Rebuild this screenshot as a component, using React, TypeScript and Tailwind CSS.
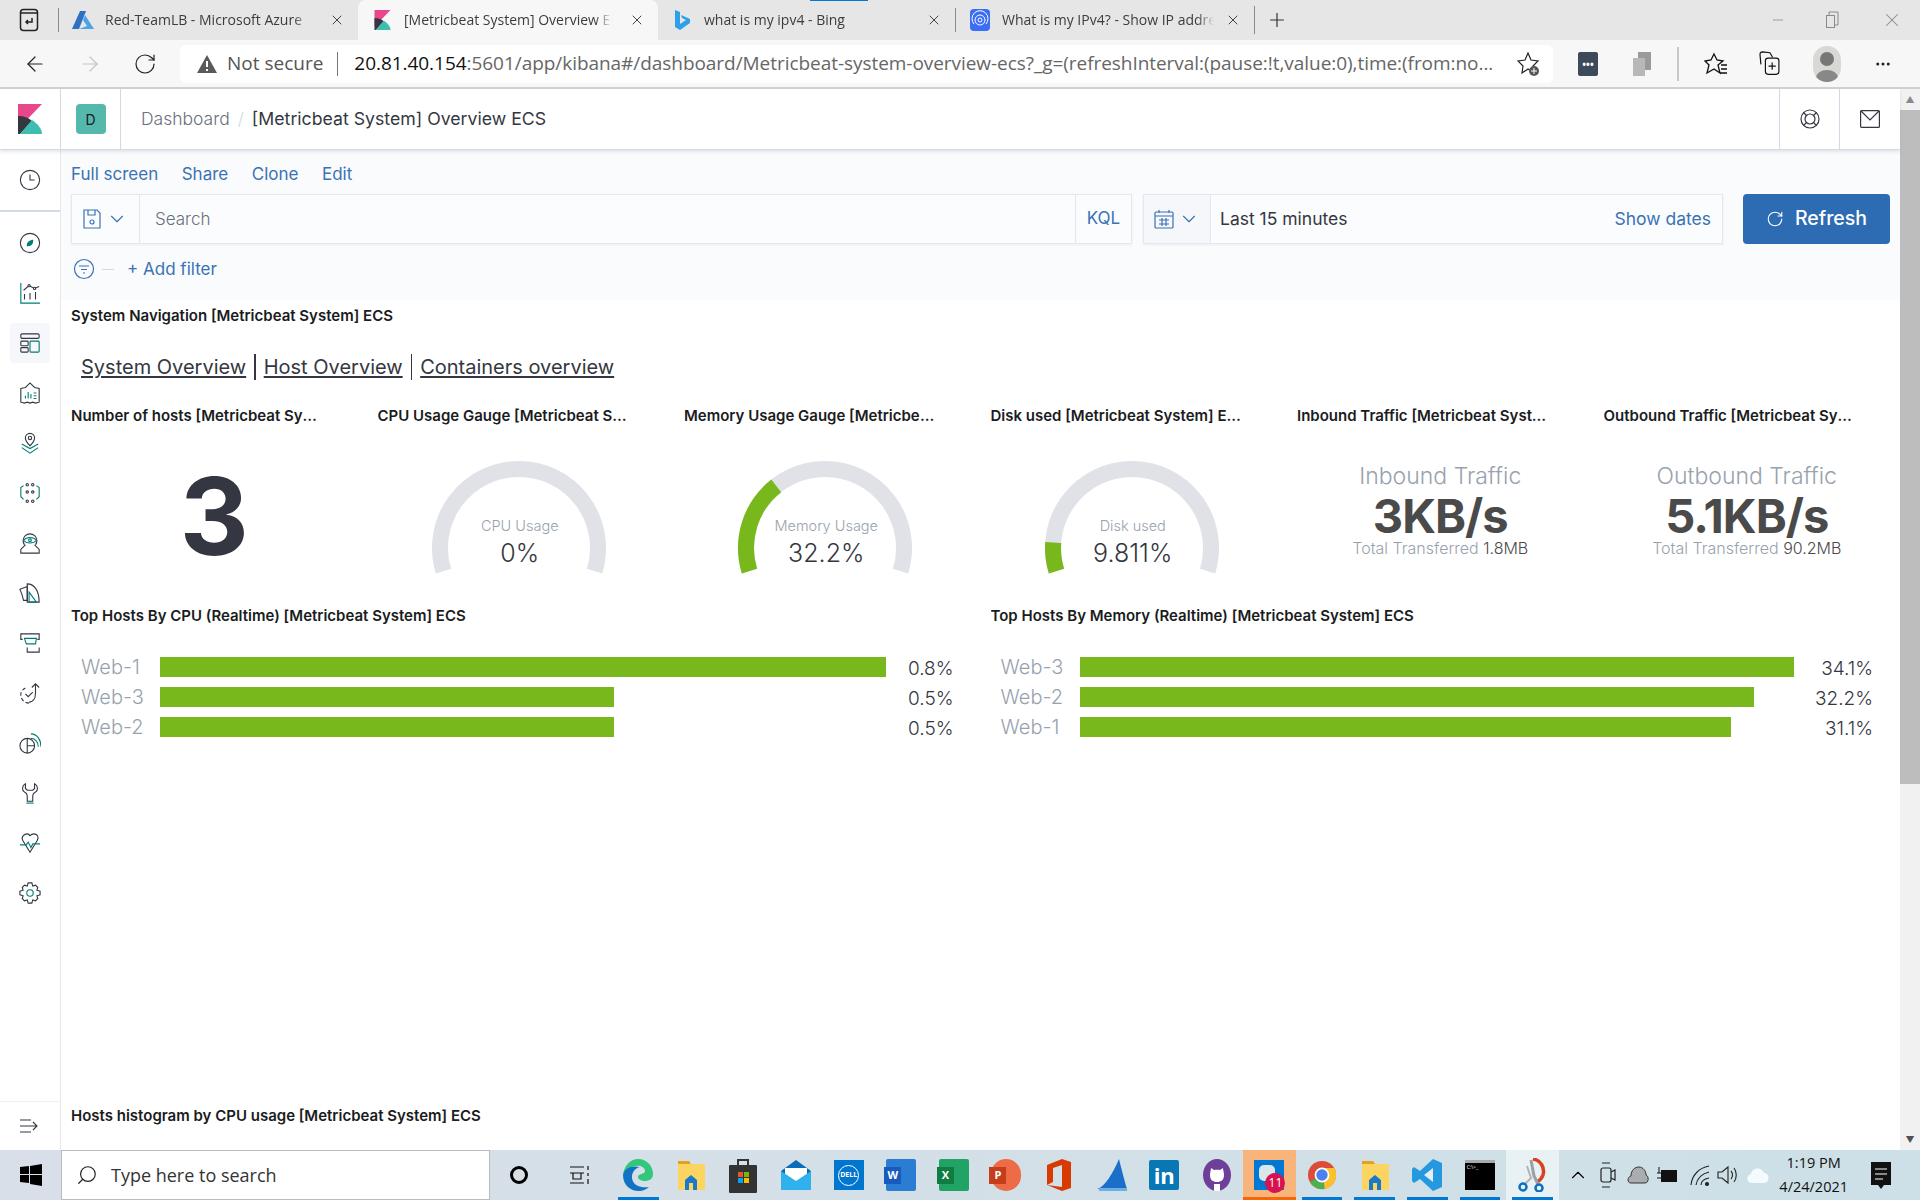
import React from 'react';
import { ArrowLeft, ArrowRight, RotateCw, X, Plus, Minus, Search, ChevronDown, ChevronUp, MoreHorizontal } from 'lucide-react';

const inter = "font-['Inter',sans-serif]";

const GREEN = '#78b81c';

const polar = (r: number, deg: number) => {
  const a = (deg * Math.PI) / 180;
  return `${(100 + r * Math.cos(a)).toFixed(2)} ${(90 - r * Math.sin(a)).toFixed(2)}`;
};

const arc = (from: number, to: number) => {
  const large = from - to > 180 ? 1 : 0;
  return `M${polar(79, from)} A79 79 0 ${large} 1 ${polar(79, to)}`;
};

const Gauge = ({ label, value, pct }: { label: string; value: string; pct: number }) => {
  const end = 197 - (214 * pct) / 100;
  return (
    <div className="relative mx-auto mt-[24px] h-[130px] w-[200px] -translate-x-[2px]">
      <svg width="200" height="130" viewBox="0 0 200 130" fill="none">
        <path d={arc(197, -17)} stroke="#e0e2e7" strokeWidth="16" />
        {pct > 0 && <path d={arc(197, end)} stroke={GREEN} strokeWidth="16" />}
      </svg>
      <div className="absolute inset-x-0 top-[58px] flex translate-x-[1px] flex-col items-center">
        <div className="text-[14.5px] leading-[20px] font-light text-[#98a2ae]">{label}</div>
        <div className="mt-[2px] text-[25px] leading-[30px] font-light text-[#343741]">{value}</div>
      </div>
    </div>
  );
};

const Traffic = ({ label, value, total }: { label: string; value: string; total: string }) => (
  <div className="flex flex-col items-center pt-[26px]">
    <div className="text-[23px] leading-[32px] font-light text-[#98a2ae]">{label}</div>
    <div className="mt-[1px] text-[47px] leading-[46px] font-bold tracking-[-1px] text-[#4a4a4a]">{value}</div>
    <div className="text-[16px] leading-[18px] font-light text-[#98a2ae]">
      Total Transferred <span className="text-[#4a4a4a]">{total}</span>
    </div>
  </div>
);

const Title = ({ children, short }: { children: React.ReactNode; short?: boolean }) => (
  <div className="flex h-[34px] items-center px-[10px] pb-[1px] text-[15px] font-semibold text-[#1a1c21]">
    <span className={`truncate ${short ? 'max-w-[253px]' : ''}`}>{children}</span>
  </div>
);

const Bars = ({ rows, max }: { rows: { name: string; value: number }[]; max: number }) => {
  const top = rows[0].value;
  return (
    <div className="mt-[18px] flex flex-col">
      {rows.map(r => (
        <div key={r.name} className="flex h-[30px] items-center pl-[20px] pr-[27px]">
          <div className="w-[79px] text-[20px] font-light text-[#98a2ae]">{r.name}</div>
          <div className="shrink-0" style={{ width: max }}>
            <div className="h-5 bg-[#78b81c]" style={{ width: (r.value / top) * max }} />
          </div>
          <div className="mt-[4px] flex-1 text-right text-[19px] font-light text-[#343741]">{r.value}%</div>
        </div>
      ))}
    </div>
  );
};

const KibanaLogo = ({ w, h }: { w: number; h: number }) => (
  <svg width={w} height={h} viewBox="0 0 24 30">
    <path d="M0 0H24L0 25Z" fill="#e8488b" />
    <path d="M0 12C6 12 11 14 14 17L2 30H0Z" fill="#343741" />
    <path d="M2 30L14 16C20 20 24 25 24 30Z" fill="#3ebeb0" />
  </svg>
);

const Tab = ({ icon, title, active, width, textWidth }: { icon: React.ReactNode; title: string; active?: boolean; width: string; textWidth: string }) => (
  <div className={`flex h-[40px] items-center pl-[13px] ${width} ${active ? 'rounded-t-[8px] bg-[#f7f7f7]' : ''}`}>
    <div className="flex w-[22px] shrink-0 justify-center">{icon}</div>
    <div className={`ml-[11px] -translate-y-[1px] overflow-hidden whitespace-nowrap text-[14px] text-[#3c3c3c] [mask-image:linear-gradient(to_right,black_92%,transparent)] ${textWidth}`}>{title}</div>
    <X size={16} strokeWidth={1.5} className="ml-auto mr-[13px] shrink-0 text-[#444]" />
  </div>
);

const S = ({ children }: { children: React.ReactNode }) => (
  <svg width="22" height="22" viewBox="0 0 24 24" fill="none" stroke="#343741" strokeWidth="1.200">
    {children}
  </svg>
);

const T = '#017d73';

const navIcons = [
  <S key="discover"><circle cx="12" cy="12" r="10.500" /><path d="M9 15C9 12 11 9.500 15 9C15 12.500 13 15 9 15Z" stroke={T} fill={T} /></S>,
  <S key="visualize"><path d="M2 1V23H23" stroke={T} /><path d="M6 13V19M12 12V19M18 11V19" /><path d="M5 9L11 4L17 7L22 5" /><circle cx="11" cy="4" r="1.200" fill="#fff" /><circle cx="17" cy="7" r="1.200" fill="#fff" /></S>,
  <S key="dashboard"><rect x="2" y="2" width="20" height="5" rx="1.500" /><rect x="2" y="10" width="8" height="5" rx="1" /><rect x="2" y="17" width="8" height="5" rx="1" /><rect x="12" y="10" width="10" height="12" rx="1" stroke={T} /></S>,
  <S key="canvas"><path d="M2 7L7 6L12 1L17 6L22 7V22L18 23L15 22L12 23L9 22L6 23L2 22Z" /><path d="M7 18V15M10 18V11M13 18V13" stroke={T} /><path d="M16 12H19M16 15H19M16 18H19" stroke={T} /></S>,
  <S key="maps"><path d="M12 15C8 11 7 9 7 6.500A5 5 0 0 1 17 6.500C17 9 16 11 12 15Z" /><circle cx="12" cy="6.500" r="1.800" /><path d="M3 13L12 18L21 13M3 17L12 23L21 17" stroke={T} /></S>,
  <S key="ml"><circle cx="9" cy="3" r="1.300" /><circle cx="15" cy="3" r="1.300" /><circle cx="9" cy="11" r="1.300" /><circle cx="15" cy="11" r="1.300" /><circle cx="9" cy="21" r="1.300" /><circle cx="15" cy="21" r="1.300" /><path d="M5 4L2 6V16L5 19M19 4L22 6V16L19 19" stroke={T} /></S>,
  <S key="infra"><path d="M6 14A7.500 7.500 0 1 1 18 14" /><path d="M5 9C8 5 16 5 19 9C16 13 8 13 5 9Z" stroke={T} /><circle cx="12" cy="9" r="1.500" stroke={T} /><path d="M7 14L2 19V23H22V19L17 14" /></S>,
  <S key="logs"><path d="M1 8L9 5V20H5L3 13Z" /><path d="M9 2C17 2 22 10 22 22H9Z" /><path d="M11 11L19 22H11Z" stroke={T} /></S>,
  <S key="apm"><path d="M4 8H2V2H22V8H20" /><path d="M6 7H19L18 13H8Z" stroke={T} /><path d="M9 17V22H22V17" /></S>,
  <S key="uptime"><path d="M11 23A9 9 0 0 1 2 13A9 9 0 0 1 8 6" strokeDasharray="4 2.500" /><path d="M7 13L10 16L15 11" /><path d="M11 22C16 22 18 17 18 12V2M14 6L18 2L22 6" /></S>,
  <S key="siem"><circle cx="9" cy="15" r="8" /><path d="M9 7V23M9 15H17" /><path d="M13 7C18 7 21 11 21 16M13 2C20 2 24 9 24 16" stroke={T} /></S>,
  <S key="dev"><path d="M7 2C3 4 3 9 6 11C8 12 9 13 9 15V21H15V15C15 13 16 12 18 11C21 9 21 4 17 2V7L15 9H9L7 7Z" /><path d="M8 23H16" stroke={T} /></S>,
  <S key="monitor"><path d="M4 9C2 5 6 2 9 2C10.500 2 11.500 3 12 4C13 3 15 2 16 2C20 2 22 5 20 9L12 22Z" /><path d="M1 14H8L10 11L13 17L15 13H23" stroke={T} fill="#fff" /></S>,
  <S key="settings"><circle cx="12" cy="12" r="3.500" stroke={T} /><path d="M10 1H14L15 4.500L18 3.500L20.500 6L19.500 9L23 10V14L19.500 15L20.500 18L18 20.500L15 19.500L14 23H10L9 19.500L6 20.500L3.500 18L4.500 15L1 14V10L4.500 9L3.500 6L6 3.500L9 4.500Z" /></S>,
];

const Cell = ({ children, underline, className = '' }: { children: React.ReactNode; underline?: boolean; className?: string }) => (
  <div className={`relative flex h-full w-[52.6px] shrink-0 items-center justify-center ${className}`}>
    {children}
    {underline && <div className="absolute inset-x-[6px] bottom-0 h-[3px] bg-[#0078d4]" />}
  </div>
);

const Folder = () => (
  <svg width="28" height="30" viewBox="0 0 28 30">
    <path d="M1 1H12L14 4H1Z" fill="#e3a21a" />
    <rect x="1" y="4" width="27" height="26" fill="#fcd462" />
    <path d="M8 30V20L14 15L20 20V30H16V23H12V30Z" fill="#1a79c9" />
  </svg>
);

const TaskIcons = () => (
  <>
    <Cell underline>
      <svg width="30" height="32" viewBox="0 0 30 32">
        <path d="M15 0C24 0 30 7 30 15C30 20 26 22 22 22C18 22 15 20 15 18C15 14 22 16 22 12C22 9 18 6 13 7C6 8 1 13 0 16C1 7 7 0 15 0Z" fill="#32c77a" />
        <path d="M0 16C0 26 7 32 16 32C20 32 24 30 26 28C20 29 10 28 9 19C8.500 14 12 9 17 8C9 6 1 9 0 16Z" fill="#1273c4" />
      </svg>
    </Cell>
    <Cell><Folder /></Cell>
    <Cell>
      <svg width="30" height="36" viewBox="0 0 30 36">
        <path d="M10 9V3H20V9" fill="none" stroke="#333" strokeWidth="2" />
        <rect x="1" y="8" width="28" height="28" rx="1" fill="#333" />
        <rect x="10" y="15" width="5" height="5" fill="#e8552b" /><rect x="16" y="15" width="5" height="5" fill="#7ab800" />
        <rect x="10" y="21" width="5" height="5" fill="#00a4ef" /><rect x="16" y="21" width="5" height="5" fill="#ffb900" />
      </svg>
    </Cell>
    <Cell>
      <svg width="30" height="30" viewBox="0 0 30 30">
        <path d="M0 11L15 0L30 11V30H0Z" fill="#0b6cb8" />
        <path d="M4 8H26V18L15 24L4 18Z" fill="#fff" />
        <path d="M0 11L15 21L30 11V30H0Z" fill="#2fb1ee" />
      </svg>
    </Cell>
    <Cell>
      <div className="flex h-[30px] w-[30px] items-center justify-center bg-[#0076ce]">
        <div className="flex h-[21px] w-[21px] items-center justify-center rounded-full border border-white text-[7px] font-bold text-white">DELL</div>
      </div>
    </Cell>
    <Cell>
      <div className="relative h-[32px] w-[30px] rounded-[2px] bg-[#2b7cd3]">
        <div className="absolute left-[-2px] top-[8px] flex h-[17px] w-[17px] items-center justify-center bg-[#185abd] text-[11px] font-bold text-white">W</div>
      </div>
    </Cell>
    <Cell>
      <div className="relative h-[32px] w-[30px] rounded-[2px] bg-[#21a366]">
        <div className="absolute left-[-2px] top-[8px] flex h-[17px] w-[17px] items-center justify-center bg-[#107c41] text-[11px] font-bold text-white">X</div>
      </div>
    </Cell>
    <Cell>
      <div className="relative h-[32px] w-[30px] rounded-full bg-[#ed6c47]">
        <div className="absolute left-[-2px] top-[8px] flex h-[17px] w-[17px] items-center justify-center bg-[#c43e1c] text-[11px] font-bold text-white">P</div>
      </div>
    </Cell>
    <Cell>
      <svg width="24" height="32" viewBox="0 0 24 32">
        <path d="M0 6L15 0L24 3V29L15 32L0 26L15 28V6L6 9V23L0 26Z" fill="#d83b01" />
      </svg>
    </Cell>
    <Cell>
      <svg width="30" height="32" viewBox="0 0 30 32">
        <path d="M22 0C24 8 27 20 30 30H0C8 28 16 14 22 0Z" fill="#1b6fc9" />
        <path d="M2 29H30V32H2Z" fill="#6db0e8" />
      </svg>
    </Cell>
    <Cell>
      <div className="flex h-[30px] w-[30px] items-center justify-center rounded-[2px] bg-[#0a77b5] text-[22px] font-bold text-white">in</div>
    </Cell>
    <Cell>
      <svg width="28" height="32" viewBox="0 0 28 32">
        <ellipse cx="14" cy="16" rx="14" ry="16" fill="#6e3f99" />
        <path d="M14 28V23C10 23 7 21 7 16C7 13 8 11 8 9L11 11C13 10.500 15 10.500 17 11L20 9C20 11 21 13 21 16C21 21 18 23 14 23" fill="#fff" />
        <path d="M11 32V25H17V32Z" fill="#fff" />
      </svg>
    </Cell>
    <Cell className="bg-[#f8b47a]">
      <div className="relative h-[30px] w-[30px] bg-[#0078d4]">
        <div className="absolute left-[5px] top-[5px] h-[16px] w-[16px] rounded-[5px] bg-[#d8e8e8]" />
        <div className="absolute bottom-[-3px] right-[-1px] flex h-[20px] w-[20px] items-center justify-center rounded-full bg-[#d8124f] text-[12px] text-white">11</div>
      </div>
      <div className="absolute inset-x-0 bottom-0 h-[3px] bg-[#f76707]" />
    </Cell>
    <Cell underline>
      <svg width="28" height="32" viewBox="0 0 32 32">
        <circle cx="16" cy="16" r="16" fill="#dd4b39" />
        <path d="M16 16L2 24A16 16 0 0 0 19 32Z" fill="#4caf50" />
        <path d="M16 8H30A16 16 0 0 1 19 32Z" fill="#fbc02d" />
        <circle cx="16" cy="16" r="7.500" fill="#4a80f0" stroke="#fff" strokeWidth="2" />
      </svg>
    </Cell>
    <Cell underline><Folder /></Cell>
    <Cell underline>
      <svg width="30" height="32" viewBox="0 0 30 32">
        <path d="M21 0L30 4V28L21 32L8 20L2 24L0 22V10L2 8L8 12Z" fill="#2499e0" />
        <path d="M21 9L12 16L21 23Z" fill="#e5eef2" />
      </svg>
    </Cell>
    <Cell underline>
      <div className="h-[30px] w-[30px] border-t-[3px] border-[#aaa] bg-black pl-[2px] text-[5px] leading-[8px] text-white">C:\&gt;_</div>
    </Cell>
    <Cell underline className="bg-[#e8f1f3]">
      <svg width="30" height="34" viewBox="0 0 30 34">
        <path d="M16 1C24 2 28 10 26 17C25 20 22 23 20 24" fill="none" stroke="#d8431e" strokeWidth="3.500" />
        <path d="M14 2L17 18L21 26" fill="none" stroke="#9aa0a6" strokeWidth="3" />
        <path d="M10 8L14 20L8 26" fill="none" stroke="#b0b4b8" strokeWidth="2" />
        <circle cx="6" cy="29" r="3.500" fill="none" stroke="#0c6fc0" strokeWidth="2.500" />
        <circle cx="22" cy="30" r="3.500" fill="none" stroke="#0c6fc0" strokeWidth="2.500" />
      </svg>
    </Cell>
  </>
);

const Tray = () => (
  <div className="flex h-full flex-1 items-center text-black">
    <ChevronUp size={22} strokeWidth={1.2} className="ml-[8px]" />
    <svg width="18" height="30" viewBox="0 0 18 30" fill="none" stroke="#222" strokeWidth="1.200" className="ml-[10px]">
      <rect x="2" y="8" width="10" height="14" rx="2" /><path d="M12 12L16 10V20L12 18" /><path d="M3 3H11M3 27H11" />
    </svg>
    <svg width="22" height="20" viewBox="0 0 22 20" className="ml-[10px]">
      <path d="M4 18C0 18 0 12 4 11C4 5 8 2 12 2C16 2 19 6 19 10C22 11 22 18 18 18Z" fill="#a9adb0" stroke="#333" />
    </svg>
    <svg width="22" height="22" viewBox="0 0 22 22" className="ml-[8px]">
      <rect x="4" y="6" width="16" height="12" fill="#111" /><path d="M0 9H4M0 14H4M2 9V3" stroke="#111" />
    </svg>
    <svg width="22" height="24" viewBox="0 0 22 24" fill="none" stroke="#222" strokeWidth="1.100" className="ml-[10px]">
      <path d="M2 22C3 12 10 5 20 3M7 22C8 16 12 11 20 9M12 22C12 19 15 16 20 15" /><circle cx="18" cy="21" r="1.500" fill="#222" />
    </svg>
    <svg width="24" height="24" viewBox="0 0 24 24" fill="none" stroke="#222" strokeWidth="1.100" className="ml-[5px]">
      <path d="M2 9H6L12 4V20L6 15H2Z" /><path d="M15 8C17 10 17 14 15 16M18 5C21 9 21 15 18 19" />
    </svg>
    <svg width="24" height="24" viewBox="0 0 24 24" className="ml-[6px]">
      <path d="M6 20C0 20 0 12 5 11C6 5 15 3 18 10C24 10 24 20 18 20Z" fill="#f3fbfd" />
    </svg>
    <div className="ml-[6px] flex w-[76px] flex-col items-center text-[14.5px] leading-[24px] text-[#111]">
      <span>1:19 PM</span>
      <span>4/24/2021</span>
    </div>
    <svg width="22" height="30" viewBox="0 0 22 30" className="ml-[18px]">
      <path d="M1 2H21V25H14L11 29L8 25H1Z" fill="#111" /><path d="M5 9H17M5 14H17M5 19H13" stroke="#fff" />
    </svg>
  </div>
);

const App: React.FC = () => {
  return (
    <div className={`flex h-screen w-[1920px] flex-col overflow-hidden bg-white ${inter}`}>
      {/* browser tabs */}
      <div className="relative flex h-[40px] shrink-0 items-center bg-[#e6e6e6] font-['Open_Sans',sans-serif]">
        <div className="flex w-[59px] items-center justify-center border-r border-[#8a8a8a]">
          <svg width="20" height="24" viewBox="0 0 20 24" fill="none" stroke="#222" strokeWidth="1.500">
            <rect x="1.500" y="1.500" width="17" height="21" rx="3" />
            <path d="M2 5H18" />
            <path d="M13 10V14H7M9 12L7 14L9 16" />
          </svg>
        </div>
        <Tab
          width="w-[299px]"
          textWidth="w-[205px]"
          title="Red-TeamLB - Microsoft Azure"
          icon={<svg width="22" height="20" viewBox="0 0 22 20"><path d="M8 1H14L7 19H0Z" fill="#2f6fc4" /><path d="M13 5L22 19H7L15 16L11 10Z" fill="#4ea3e6" /></svg>}
        />
        <Tab width="w-[300px]" textWidth="w-[208px]" active title="[Metricbeat System] Overview ECS" icon={<KibanaLogo w={17} h={20} />} />
        <Tab
          width="w-[297px]"
          textWidth="w-[200px]"
          title="what is my ipv4 - Bing"
          icon={<svg width="16" height="22" viewBox="0 0 16 22"><path d="M1 1L6 3V15L12 11L8 9L7 6L16 10V14L6 21L1 18Z" fill="#2f9fe8" /></svg>}
        />
        <div className="h-[24px] w-px bg-[#8a8a8a]" />
        <Tab
          width="w-[298px]"
          textWidth="w-[212px]"
          title="What is my IPv4? - Show IP address"
          icon={<svg width="20" height="22" viewBox="0 0 20 22" fill="none"><rect width="20" height="22" rx="4" fill="#3b6ef5" /><circle cx="10" cy="11" r="2" stroke="#fff" /><circle cx="10" cy="11" r="5" stroke="#fff" /><path d="M4 15A8 8 0 1 1 16 15" stroke="#fff" /></svg>}
        />
        <div className="h-[28px] w-px bg-[#8a8a8a]" />
        <Plus size={22} strokeWidth={1.3} className="ml-[11px] text-[#333]" />
        <div className="ml-auto flex items-center text-[#8a8a8a]">
          <Minus size={16} strokeWidth={1.2} />
          <svg width="16" height="20" viewBox="0 0 16 20" fill="none" stroke="#8a8a8a" className="ml-[39px]">
            <rect x="1.500" y="5.500" width="8" height="12" /><path d="M4 5V2H13V15H10" />
          </svg>
          <X size={22} strokeWidth={1.1} className="ml-[40px] mr-[17px]" />
        </div>
        <div className="absolute left-[810px] top-0 h-px w-[58px] bg-[#0078d4]" />
      </div>

      {/* address bar */}
      <div className="flex h-[49px] shrink-0 items-center border-b-2 border-[#d0d0d0] bg-[#f7f7f7] font-['Open_Sans',sans-serif]">
        <ArrowLeft size={24} strokeWidth={1.2} className="ml-[23px] text-[#222]" />
        <ArrowRight size={24} strokeWidth={1.2} className="ml-[31px] text-[#c4c4c4]" />
        <RotateCw size={24} strokeWidth={1.2} className="ml-[31px] text-[#222]" />
        <div className="ml-[23px] flex h-[38px] w-[1373px] items-center rounded-[6px] bg-white">
          <svg width="20" height="18" viewBox="0 0 20 18" className="ml-[17px] shrink-0">
            <path d="M10 0L20 18H0Z" fill="#5a5a5a" /><path d="M10 6V12M10 14V16" stroke="#fff" strokeWidth="2" />
          </svg>
          <span className="ml-[10px] whitespace-nowrap text-[19px] text-[#555]">Not secure</span>
          <div className="ml-[14px] h-[24px] w-px shrink-0 bg-[#777]" />
          <div className="ml-[16px] w-[1143px] shrink-0 overflow-hidden whitespace-nowrap text-[19px] tracking-[-0.05px] text-[#666]">
            <span className="text-[#111]">20.81.40.154</span>:5601/app/kibana#/dashboard/Metricbeat-system-overview-ecs?_g=(refreshInterval:(pause:!t,value:0),time:(from:no...
          </div>
          <svg width="24" height="26" viewBox="0 0 24 26" fill="none" className="ml-[20px] shrink-0">
            <path d="M11 2L14 9L21 10L16 15L17 22L11 18L5 22L6 15L1 10L8 9Z" stroke="#222" strokeWidth="1.200" />
            <circle cx="17" cy="20" r="5" fill="#555" /><path d="M17 17V23M14 20H20" stroke="#fff" />
          </svg>
        </div>
        <div className="ml-[25px] flex h-[24px] w-[20px] items-center justify-center rounded-[2px] bg-[#3c4a5a] text-[10px] leading-none font-bold text-white">•••</div>
        <svg width="20" height="26" viewBox="0 0 20 26" className="ml-[34px]">
          <rect x="6" y="1" width="13" height="18" fill="#9a9a9a" /><rect x="1" y="7" width="12" height="18" fill="#b8b8b8" />
        </svg>
        <div className="ml-[25px] h-[34px] w-[2px] bg-[#c8c8c8]" />
        <svg width="24" height="24" viewBox="0 0 24 24" fill="none" stroke="#111" strokeWidth="1.300" className="ml-[25px]">
          <path d="M10 2L13 8L19 9L14 13L16 21L10 17L3 21L5 13L1 9L7 8Z" /><path d="M17 13H23M17 17H23M16 21H23" />
        </svg>
        <svg width="22" height="27" viewBox="0 0 24 30" fill="none" stroke="#111" strokeWidth="1.300" className="ml-[30px]">
          <path d="M3 16L2 5C2 3 3 2 5 2L13 3L16 8" /><rect x="8" y="9" width="15" height="18" rx="3" /><path d="M15.500 14V22M11.500 18H19.500" />
        </svg>
        <div className="ml-[33px] flex h-[36px] w-[28px] items-center justify-center overflow-hidden rounded-full bg-[#d8d8d4]">
          <svg width="28" height="36" viewBox="0 0 28 36"><circle cx="14" cy="13" r="7" fill="#777" /><ellipse cx="14" cy="32" rx="11" ry="8" fill="#888" /></svg>
        </div>
        <MoreHorizontal size={18} strokeWidth={2} className="ml-[33px] text-[#222]" />
      </div>

      <div className="flex min-h-0 flex-1">
        <div className="flex min-w-0 flex-1 flex-col">
          {/* kibana header */}
          <div className="z-10 flex h-[61px] shrink-0 items-center border-b border-[#d3dae6] bg-white shadow-[0_2px_3px_rgba(152,162,179,0.25)]">
            <div className="flex h-full w-[61px] shrink-0 items-center justify-center border-r border-[#d3dae6]">
              <KibanaLogo w={24} h={30} />
            </div>
            <div className="flex h-full w-[60px] shrink-0 items-center justify-center border-r border-[#d3dae6]">
              <div className="flex h-[30px] w-[30px] items-center justify-center rounded-[4px] bg-[#54b8ad] text-[14px] text-[#1a1c21]">D</div>
            </div>
            <span className="ml-[20px] text-[17.5px] font-light text-[#69707d]">Dashboard</span>
            <span className="mx-[8px] text-[17.5px] font-light text-[#d3dae6]">/</span>
            <span className="text-[17.7px] text-[#343741]">[Metricbeat System] Overview ECS</span>
            <div className="ml-auto flex h-full w-[60px] items-center justify-center border-l border-[#d3dae6]">
              <svg width="20" height="20" viewBox="0 0 20 20" fill="none" stroke="#343741" strokeWidth="1.200">
                <circle cx="10" cy="10" r="9" /><circle cx="10" cy="10" r="5" /><path d="M3.500 3.500L6.500 6.500M16.500 3.500L13.500 6.500M3.500 16.500L6.500 13.500M16.500 16.500L13.500 13.500" />
              </svg>
            </div>
            <div className="flex h-full w-[61px] items-center justify-center border-l border-[#d3dae6]">
              <svg width="20" height="18" viewBox="0 0 20 18" fill="none" stroke="#343741" strokeWidth="1.200">
                <rect x="0.600" y="0.600" width="18.800" height="16.800" rx="1" /><path d="M1 1L10 10L19 1" />
              </svg>
            </div>
          </div>

          <div className="flex min-h-0 flex-1">
            {/* kibana side nav */}
            <div className="flex w-[61px] shrink-0 flex-col border-r border-[#e4e7ee] bg-white">
              <div className="flex h-[62px] shrink-0 items-center justify-center border-b-2 border-[#d3dae6]">
                <S><circle cx="12" cy="12" r="10.500" /><path d="M12 6V12H17" /></S>
              </div>
              <div className="flex flex-col pt-[6px]">
                {navIcons.map((icon, i) => (
                  <div key={i} className="flex h-[50px] items-center justify-center">
                    <div className={`flex h-[40px] w-[40px] items-center justify-center rounded-[4px] ${i === 2 ? 'bg-[#f5f7fa]' : ''}`}>{icon}</div>
                  </div>
                ))}
              </div>
              <div className="mt-auto flex h-[49px] items-center justify-center border-t border-[#eef0f4]">
                <svg width="20" height="14" viewBox="0 0 20 14" fill="none" stroke="#343741" strokeWidth="1.100">
                  <path d="M0 1H11M0 7H17M0 13H11M13 3L17 7L13 11" />
                </svg>
              </div>
            </div>

            {/* page body */}
            <div className="min-w-0 flex-1 overflow-hidden">
              <div className="h-[150px] bg-[#fafbfd] px-[10px]">
                <div className="flex h-[44px] items-center gap-[23.500px] pt-[5px] text-[17px] text-[#3a72b4]">
                  <span>Full screen</span>
                  <span>Share</span>
                  <span>Clone</span>
                  <span>Edit</span>
                </div>
                <div className="flex h-[50px] items-stretch">
                  <div className="flex h-[50px] w-[1061px] items-center border border-[#e3e7ef] bg-[#fbfcfd] shadow-[0_1px_2px_rgba(152,162,179,0.15)]">
                    <div className="flex h-full w-[68px] items-center justify-center gap-[5px] border-r border-[#e3e7ef]">
                      <svg width="18" height="20" viewBox="0 0 18 20" fill="none" stroke="#3a72b4" strokeWidth="1.200">
                        <path d="M1 1H14L17 4V19H1Z" /><path d="M5 1V6H12V1" /><circle cx="9" cy="13" r="2" />
                      </svg>
                      <ChevronDown size={22} strokeWidth={1.200} className="text-[#3a72b4]" />
                    </div>
                    <span className="ml-[15px] translate-y-[1px] text-[17px] font-light text-[#69707d]">Search</span>
                    <div className="ml-auto flex h-full w-[56px] items-center justify-center border-l border-[#e3e7ef] text-[17px] text-[#3a72b4]">KQL</div>
                  </div>
                  <div className="ml-[11px] flex h-[50px] w-[580px] items-center border border-[#e3e7ef] bg-[#fbfcfd] shadow-[0_1px_2px_rgba(152,162,179,0.15)]">
                    <div className="flex h-full w-[67px] items-center justify-center gap-[4px] border-r border-[#e3e7ef] bg-[#f5f7fa]">
                      <svg width="20" height="20" viewBox="0 0 20 20" fill="none" stroke="#3a72b4" strokeWidth="1.200">
                        <rect x="1" y="3" width="18" height="16" rx="1" /><path d="M1 7H19M5 1V4M15 1V4M5 11H15M5 15H15M8 9V17M12 9V17" />
                      </svg>
                      <ChevronDown size={22} strokeWidth={1.200} className="text-[#3a72b4]" />
                    </div>
                    <span className="ml-[9px] text-[17.500px] text-[#343741]">Last 15 minutes</span>
                    <span className="ml-auto mr-[11px] text-[17.500px] text-[#3a72b4]">Show dates</span>
                  </div>
                  <div className="ml-[20px] flex h-[50px] w-[147px] items-center justify-center gap-[11px] rounded-[4px] bg-[#2d6cb2] text-[19.500px] font-medium text-white">
                    <RotateCw size={18} strokeWidth={1.500} />
                    Refresh
                  </div>
                </div>
                <div className="flex h-[50px] items-center pl-[2px] text-[17px] text-[#3a72b4]">
                  <svg width="22" height="22" viewBox="0 0 22 22" fill="none" stroke="#3a72b4" strokeWidth="1.200">
                    <circle cx="11" cy="11" r="9.500" /><path d="M6 8H16M8 11.500H14M10 15H12" />
                  </svg>
                  <div className="ml-[7px] h-px w-[12px] bg-[#d3dae6]" />
                  <span className="ml-[13px] translate-y-[1px]">+ Add filter</span>
                </div>
              </div>

              <div className="h-[100px]">
                <Title>System Navigation [Metricbeat System] ECS</Title>
                <div className="mt-[19px] flex items-center pl-[20px] text-[20px] leading-[28px] text-[#343741]">
                  <span className="underline underline-offset-2">System Overview</span>
                  <div className="mx-[8px] h-[26px] w-[1.500px] bg-[#343741]" />
                  <span className="underline underline-offset-2">Host Overview</span>
                  <div className="mx-[8px] h-[26px] w-[1.500px] bg-[#343741]" />
                  <span className="underline underline-offset-2">Containers overview</span>
                </div>
              </div>

              <div className="grid h-[200px] grid-cols-6">
                <div className="min-w-0">
                  <Title short>Number of hosts [Metricbeat System] ECS</Title>
                  <div className="mt-[17px] text-center text-[107px] leading-[130px] font-bold text-[#343741]">3</div>
                </div>
                <div className="min-w-0">
                  <Title short>CPU Usage Gauge [Metricbeat System] ECS</Title>
                  <Gauge label="CPU Usage" value="0%" pct={0} />
                </div>
                <div className="min-w-0">
                  <Title short>Memory Usage Gauge [Metricbeat System] ECS</Title>
                  <Gauge label="Memory Usage" value="32.2%" pct={32.2} />
                </div>
                <div className="min-w-0">
                  <Title short>Disk used [Metricbeat System] ECS</Title>
                  <Gauge label="Disk used" value="9.811%" pct={9.811} />
                </div>
                <div className="min-w-0">
                  <Title short>Inbound Traffic [Metricbeat System] ECS</Title>
                  <Traffic label="Inbound Traffic" value="3KB/s" total="1.8MB" />
                </div>
                <div className="min-w-0">
                  <Title short>Outbound Traffic [Metricbeat System] ECS</Title>
                  <Traffic label="Outbound Traffic" value="5.1KB/s" total="90.2MB" />
                </div>
              </div>

              <div className="grid h-[500px] grid-cols-2">
                <div className="min-w-0">
                  <Title>Top Hosts By CPU (Realtime) [Metricbeat System] ECS</Title>
                  <Bars max={726} rows={[{ name: 'Web-1', value: 0.8 }, { name: 'Web-3', value: 0.5 }, { name: 'Web-2', value: 0.5 }]} />
                </div>
                <div className="min-w-0">
                  <Title>Top Hosts By Memory (Realtime) [Metricbeat System] ECS</Title>
                  <Bars max={714} rows={[{ name: 'Web-3', value: 34.1 }, { name: 'Web-2', value: 32.2 }, { name: 'Web-1', value: 31.1 }]} />
                </div>
              </div>

              <Title>Hosts histogram by CPU usage [Metricbeat System] ECS</Title>
            </div>
          </div>
        </div>

        {/* page scrollbar */}
        <div className="flex w-[20px] shrink-0 flex-col bg-[#f1f1f1]">
          <div className="flex h-[21px] items-center justify-center text-[9px] text-[#8a8a8a]">▲</div>
          <div className="h-[674px] bg-[#bdbdbd]" />
          <div className="mt-auto flex h-[21px] items-center justify-center text-[9px] text-[#505050]">▼</div>
        </div>
      </div>

      {/* windows taskbar */}
      <div className="flex h-[50px] shrink-0 items-center bg-gradient-to-r from-[#d9dfe8] to-[#cde0e7] font-['Open_Sans',sans-serif]">
        <div className="flex h-full w-[61px] shrink-0 items-center justify-center">
          <svg width="22" height="22" viewBox="0 0 22 22" fill="#000"><path d="M0 3L9 2V10H0ZM10 2L22 0V10H10ZM0 11H9V19L0 18ZM10 11H22V22L10 20Z" /></svg>
        </div>
        <div className="flex h-full w-[429px] shrink-0 items-center border border-[#b8bcc2] bg-white">
          <Search size={22} strokeWidth={1.300} className="ml-[14px] -scale-x-100 text-[#222]" />
          <span className="ml-[13px] text-[18px] text-[#333]">Type here to search</span>
        </div>
        <div className="flex h-full w-[58px] items-center justify-center">
          <div className="h-[18px] w-[18px] rounded-full border-[3px] border-black" />
        </div>
        <div className="flex h-full w-[64px] items-center justify-center">
          <svg width="22" height="20" viewBox="0 0 22 20" fill="none" stroke="#111" strokeWidth="1.200">
            <path d="M1 2H15M1 8H15M1 18H15M4 8V14H12V8" /><path d="M19 1V5M19 8V11M19 14V19" />
          </svg>
        </div>
        <TaskIcons />
        <Tray />
      </div>
    </div>
  );
};

export default App;
